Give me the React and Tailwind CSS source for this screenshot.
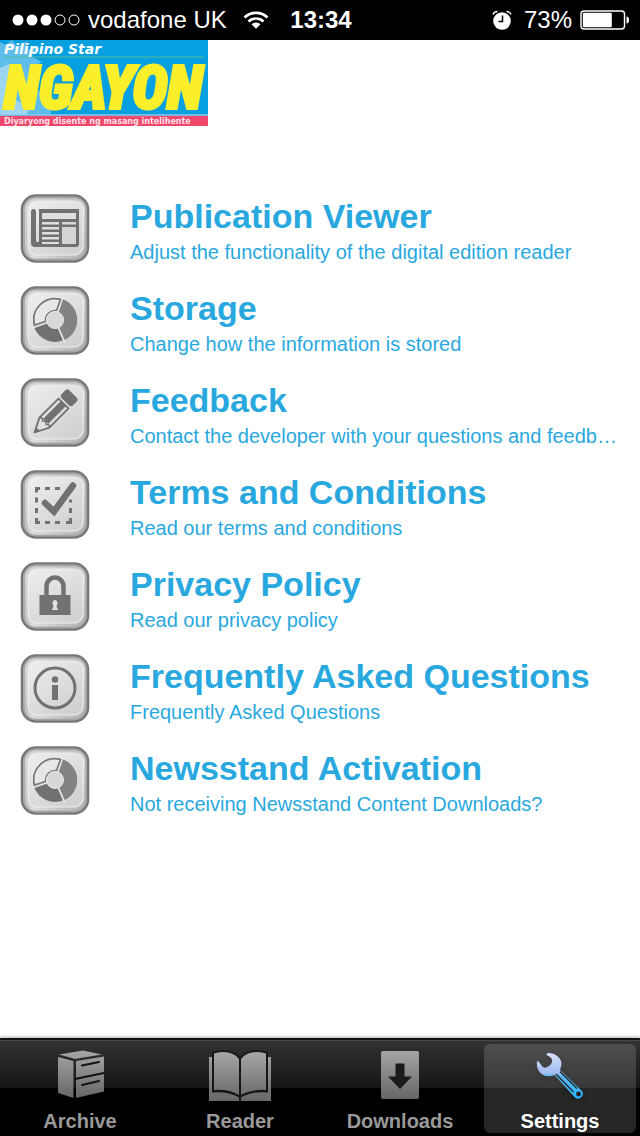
import React from "react";

function Tile({ children }) {
  return (
    <svg viewBox="0 0 70 70" className="size-[70px] shrink-0" aria-hidden="true">
      <defs>
        <linearGradient id="tileRim" x1="0" y1="0" x2="1" y2="1">
          <stop offset="0" stopColor="#d9dadb" />
          <stop offset="0.45" stopColor="#c2c3c5" />
          <stop offset="0.55" stopColor="#dcddde" />
          <stop offset="1" stopColor="#a8a9ab" />
        </linearGradient>
        <linearGradient id="tileFace" x1="0" y1="0" x2="0.7" y2="1">
          <stop offset="0" stopColor="#efeff0" />
          <stop offset="0.5" stopColor="#dfe0e1" />
          <stop offset="1" stopColor="#d0d1d3" />
        </linearGradient>
      </defs>
      <rect x="2" y="1.500" width="66" height="66" rx="14" fill="url(#tileRim)" stroke="#77787a" strokeWidth="2.600" />
      <rect x="4" y="3.500" width="62" height="62" rx="12" fill="none" stroke="#a3a4a6" strokeWidth="1.500" />
      <rect x="8" y="7" width="55" height="54" rx="9" fill="url(#tileFace)" stroke="#ededee" strokeWidth="1.200" />
      {children}
    </svg>
  );
}

function NewspaperIcon() {
  return (
    <g>
      <path d="M13.500 15q2.500 0 2.500 3v28.500q0 1.500 1.500 1.500t1.500-1.500V15H59v35q0 3-3 3H15q-4 0-4-4V18q0-3 2.500-3z" fill="#707173" />
      <path d="M22 19h34v6H22z" fill="#dedfe1" />
      <path d="M22 28h17v2.500H22zm0 5h17v2.500H22zm0 5h17v2.500H22zm0 5h17v2.500H22zm0 5h17v2H22z" fill="#dedfe1" />
      <path d="M42 28h14v2.500H42zm0 5h14v17H42z" fill="#d4d5d7" />
    </g>
  );
}

function RingIcon() {
  return (
    <g>
      <circle cx="35" cy="34" r="22" fill="#707173" />
      <path d="M35 34 43 13.500A22 22 0 0 1 44.500 54z" fill="#828385" />
      <path d="M41 14A20.500 20.500 0 0 0 14.800 40L27 36A9 9 0 0 1 37 26z" fill="#e6e7e8" />
      <path d="M35 34 43 11M35 34 12 42M35 34 45 57" stroke="#e6e7e8" strokeWidth="1.800" />
      <path d="M40.500 13.500A21 21 0 0 0 14.500 39L25.500 35.500A10 10 0 0 1 36.500 24.500z" fill="none" stroke="#77787a" strokeWidth="1.600" />
      <circle cx="35" cy="34" r="8.500" fill="#d7d8da" stroke="#e8e9ea" strokeWidth="1" />
    </g>
  );
}

function PencilIcon() {
  return (
    <g transform="translate(14.500 54.500) rotate(-45)" fill="#707173">
      <path d="M0 0 14-7H41V7H14z" fill="#dfe0e2" stroke="#707173" strokeWidth="1.800" strokeLinejoin="round" />
      <path d="M0 0 5-2.500V2.500z" />
      <path d="M14-7Q17-4 14-2.500 17 0 14 2.500 17 5 14 7" fill="none" stroke="#707173" strokeWidth="1.600" />
      <rect x="16" y="-3.600" width="25" height="7.200" />
      <rect x="43.500" y="-8" width="11" height="16" rx="3" />
    </g>
  );
}

function CheckIcon() {
  return (
    <g>
      <path
        d="M16.500 22.500V18.500H20M25 18.500h5M35 18.500h5M16.500 27.500v5M16.500 38v5M16.500 48v4.500H20M25 52.500h5M35 52.500h5M46 52.500h4.500V48M50.500 43v-5M50.500 32.500v-3"
        fill="none"
        stroke="#707173"
        strokeWidth="3"
      />
      <path d="M25 33 34 41.500 53 15.500" fill="none" stroke="#707173" strokeWidth="6.500" strokeLinecap="round" strokeLinejoin="miter" />
    </g>
  );
}

function LockIcon() {
  return (
    <g>
      <path d="M26.500 34V24.500a8.500 9 0 0 1 17 0V34" fill="none" stroke="#707173" strokeWidth="4.500" />
      <rect x="19.500" y="33" width="31" height="20" fill="#707173" />
      <path d="M35 38a3 3 0 0 1 1.800 5v3.500H38V48h-6v-1.500h1.200V43A3 3 0 0 1 35 38z" fill="#e2e3e4" />
    </g>
  );
}

function InfoIcon() {
  return (
    <g fill="#707173">
      <circle cx="35" cy="34" r="20" fill="none" stroke="#707173" strokeWidth="3" />
      <circle cx="35" cy="25.500" r="3.200" />
      <path d="M32 31h6v15h-6z" />
    </g>
  );
}

function ArchiveIcon() {
  return (
    <svg viewBox="0 0 48 52" className="h-[52px] w-[48px]" aria-hidden="true">
      <defs>
        <linearGradient id="archiveFill" gradientUnits="userSpaceOnUse" x1="0" y1="0" x2="0" y2="50">
          <stop offset="0" stopColor="#a9a9a9" />
          <stop offset="1" stopColor="#666" />
        </linearGradient>
      </defs>
      <g fill="url(#archiveFill)">
        <path d="M3 6.500 27 2.500 46 6.500 19 11z" />
        <path d="M2 9 17.500 13V50L2 45z" />
        <path d="M20 13 48 8.500V43.500L20 50z" />
      </g>
      <path d="M19 31 48 25" stroke="#111" strokeWidth="2.200" />
      <path d="M26 17.500 43 14M26 37 43 33" stroke="#151515" strokeWidth="2" strokeLinecap="round" />
    </svg>
  );
}

function ReaderIcon() {
  return (
    <svg viewBox="0 0 62 54" className="-mb-0.5 h-[54px] w-[62px]" aria-hidden="true">
      <defs>
        <linearGradient id="readerFill" gradientUnits="userSpaceOnUse" x1="0" y1="2" x2="0" y2="53">
          <stop offset="0" stopColor="#a9a9a9" />
          <stop offset="1" stopColor="#666" />
        </linearGradient>
      </defs>
      <path d="M0 9H62V53H0z" fill="url(#readerFill)" />
      <path d="M3 4Q20-1 31 9 42-1 59 4V44.500Q42 43 31 50 20 43 3 44.500z" fill="#151515" />
      <path d="M5 5.500Q22 1 30 11V47Q20 41 5 42zM57 5.500Q40 1 32 11V47Q42 41 57 42z" fill="url(#readerFill)" />
      <path d="M31 9V53" stroke="#151515" strokeWidth="2" />
    </svg>
  );
}

function DownloadsIcon() {
  return (
    <svg viewBox="0 0 40 52" className="h-[52px] w-[40px]" aria-hidden="true">
      <defs>
        <linearGradient id="downloadFill" x1="0" y1="0" x2="0" y2="1">
          <stop offset="0" stopColor="#a5a5a5" />
          <stop offset="1" stopColor="#666" />
        </linearGradient>
      </defs>
      <rect x="1" y="3" width="38" height="48" rx="2" fill="url(#downloadFill)" />
      <path d="M15.500 15.500h9v13H32L20 41 8 28.500h7.500z" fill="#1b1b1b" />
    </svg>
  );
}

function SettingsIcon() {
  return (
    <svg viewBox="0 0 48 52" className="h-[52px] w-[48px] drop-shadow-md" aria-hidden="true">
      <defs>
        <linearGradient id="wrenchFill" x1="0" y1="0" x2="0" y2="1">
          <stop offset="0" stopColor="#d4e1fa" />
          <stop offset="0.440" stopColor="#a3bdf0" />
          <stop offset="0.500" stopColor="#5fb8f3" />
          <stop offset="1" stopColor="#25b4ff" />
        </linearGradient>
      </defs>
      <path
        d="M10.500 5.500Q13 4.500 18 6Q26 10 25.500 16.500Q25 19.500 24 22L45.500 42.500A4.800 4.800 0 0 1 39 49.500L18.500 27Q11 30 5.500 26Q0 21 1 13Q3 13 4.500 16Q7 20.500 10 19.500Q16.500 17.500 16 12Q15.500 9 11 7.500z"
        fill="url(#wrenchFill)"
      />
      <path d="M20 26 37.500 44M24 23.500 41 40.500" stroke="#262b30" strokeWidth="1.400" />
      <circle cx="42.500" cy="46" r="2.400" fill="#222" />
    </svg>
  );
}

const settings = [
  { title: "Publication Viewer", detail: "Adjust the functionality of the digital edition reader", Icon: NewspaperIcon },
  { title: "Storage", detail: "Change how the information is stored", Icon: RingIcon },
  { title: "Feedback", detail: "Contact the developer with your questions and feedback", Icon: PencilIcon },
  { title: "Terms and Conditions", detail: "Read our terms and conditions", Icon: CheckIcon },
  { title: "Privacy Policy", detail: "Read our privacy policy", Icon: LockIcon },
  { title: "Frequently Asked Questions", detail: "Frequently Asked Questions", Icon: InfoIcon },
  { title: "Newsstand Activation", detail: "Not receiving Newsstand Content Downloads?", Icon: RingIcon },
];

const tabs = [
  { label: "Archive", Icon: ArchiveIcon },
  { label: "Reader", Icon: ReaderIcon },
  { label: "Downloads", Icon: DownloadsIcon },
  { label: "Settings", Icon: SettingsIcon, active: true },
];

function StatusBar() {
  return (
    <div className="grid h-10 grid-cols-[1fr_auto_1fr] items-center bg-black pr-[10px] pl-3 text-[24px] leading-10 text-white">
      <div className="flex items-center gap-2">
        <svg viewBox="0 0 68 12" className="h-3 w-[68px]" aria-hidden="true">
          <g fill="#fff">
            <circle cx="6" cy="6" r="5.500" />
            <circle cx="20" cy="6" r="5.500" />
            <circle cx="34" cy="6" r="5.500" />
          </g>
          <g fill="none" stroke="#fff">
            <circle cx="48" cy="6" r="5" />
            <circle cx="62" cy="6" r="5" />
          </g>
        </svg>
        <span className="whitespace-nowrap">vodafone UK</span>
        <svg viewBox="0 0 26 18" className="ml-2 h-[18px] w-[26px]" aria-hidden="true">
          <path d="M1.500 6.500a16.500 16.500 0 0 1 23 0M5.500 10.500a11 11 0 0 1 15 0" fill="none" stroke="#fff" strokeWidth="2.600" />
          <path d="M8.500 13.200a6.500 6.500 0 0 1 9 0L13 17.800z" fill="#fff" />
        </svg>
      </div>
      <time className="font-bold">13:34</time>
      <div className="flex items-center justify-end gap-2">
        <svg viewBox="0 0 20 20" className="mr-1 size-5" aria-hidden="true">
          <circle cx="10" cy="11" r="8.800" fill="#fff" />
          <path d="M1 4.500Q2 1.500 5.500 1.500M19 4.500Q18 1.500 14.500 1.500" fill="none" stroke="#fff" strokeWidth="1.500" />
          <path d="M10.500 5.500v6H6.500" fill="none" stroke="#000" strokeWidth="1.500" />
        </svg>
        <span>73%</span>
        <svg viewBox="0 0 50 20" className="h-5 w-[50px]" aria-hidden="true">
          <rect x="1" y="1" width="43.500" height="18" rx="3" fill="none" stroke="#fff" strokeWidth="1.400" />
          <rect x="2.800" y="2.800" width="29" height="14.400" rx="1" fill="#fff" />
          <path d="M46.500 6.500q2.500 0 2.500 3.500t-2.500 3.500z" fill="#fff" />
        </svg>
      </div>
    </div>
  );
}

function Masthead() {
  return (
    <svg viewBox="0 0 208 86" className="block h-[86px] w-[208px]" role="img" aria-label="Pilipino Star Ngayon">
      <rect width="208" height="86" fill="#069fe0" />
      <path
        d="M0 2 6 5 12 0 17 7 27 1 26 10 38 7 31 16 42 22 32 27 38 38 29 40 34 52 44 50 42 60 54 64 50 75H0z"
        fill="#5fbdec"
      />
      <path d="M0 28 9 24 14 36 8 48 16 60 30 68 26 75H0z" fill="#9cd6f3" />
      <path d="M4 17H204" stroke="#55bc9b" strokeWidth="1" />
      <path d="M0 75H208" stroke="#9bc5e4" strokeWidth="1.500" />
      <rect y="76" width="208" height="10" fill="#f0476d" />
      <text x="4" y="14" fill="#fff" fontFamily="DejaVu Sans" fontWeight="bold" fontStyle="italic" fontSize="14">
        Pilipino Star
      </text>
      <g
        fontFamily="Liberation Sans Narrow, Roboto Condensed, Liberation Sans, sans-serif"
        fontWeight="bold"
        fontStyle="italic"
        fontSize="59"
      >
        <text x="4" y="68" fill="#fbee2b" stroke="#fbee2b" strokeWidth="4">
          NGAYON
        </text>
      </g>
      <text x="4" y="84" fill="#ffe1e8" fontFamily="DejaVu Sans" fontWeight="bold" fontSize="8">
        Diyaryong disente ng masang intelihente
      </text>
    </svg>
  );
}

export default function App() {
  return (
    <div className="flex min-h-screen flex-col bg-white font-['Liberation_Sans',Arial,sans-serif]">
      <StatusBar />
      <header>
        <Masthead />
      </header>
      <main className="flex-1 pt-[57px]">
        <ul>
          {settings.map(({ title, detail, Icon }) => (
            <li key={title}>
              <a href="#" className="flex h-[92px] items-center gap-10 pr-3 pl-5 text-[#29a8df]">
                <Tile>
                  <Icon />
                </Tile>
                <div className="flex min-w-0 flex-1 flex-col gap-1 pt-0.5">
                  <h2 className="truncate text-[34px] leading-10 font-bold">{title}</h2>
                  <p className="truncate text-[20px] leading-6">{detail}</p>
                </div>
              </a>
            </li>
          ))}
        </ul>
      </main>
      <nav className="grid h-[98px] grid-cols-4 border-t-2 border-[#111] bg-linear-to-b from-[#333] from-0% via-[#161616] via-50% to-black to-50% shadow-[0_-1px_3px_rgba(0,0,0,0.3)]">
        {tabs.map(({ label, Icon, active }) => (
          <div key={label} className="flex border-t border-[#484848] px-1 pt-[3px] pb-1">
            <button
              type="button"
              aria-current={active ? "page" : undefined}
              className={
                active
                  ? "flex flex-1 flex-col items-center rounded-md bg-white/15 pt-1 text-white"
                  : "flex flex-1 flex-col items-center pt-1 text-[#999]"
              }
            >
              <Icon />
              <span className="mt-[9px] text-[20px] leading-6 font-bold">{label}</span>
            </button>
          </div>
        ))}
      </nav>
    </div>
  );
}
